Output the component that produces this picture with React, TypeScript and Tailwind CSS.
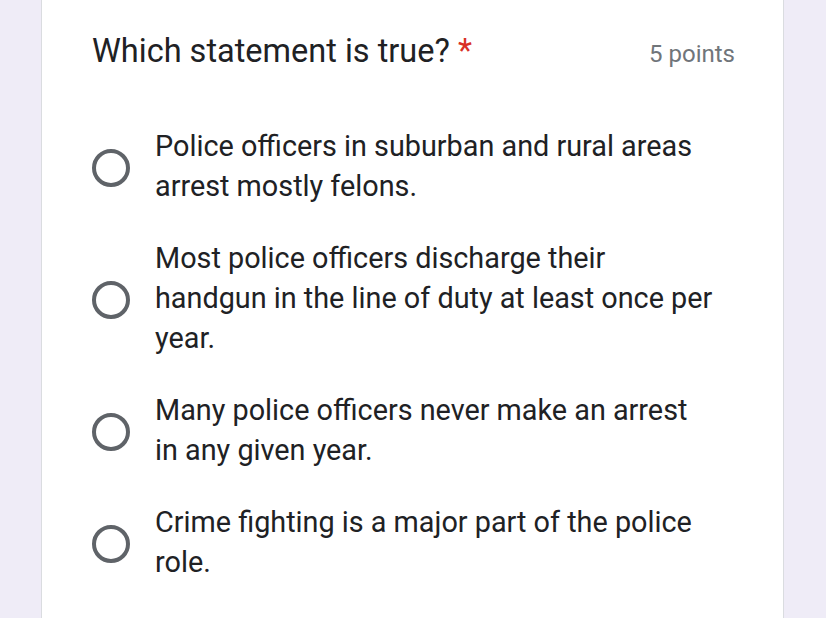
import React from 'react';

const options = [
  'Police officers in suburban and rural areas arrest mostly felons.',
  'Most police officers discharge their handgun in the line of duty at least once per year.',
  'Many police officers never make an arrest in any given year.',
  'Crime fighting is a major part of the police role.',
];

const App = () => {
  return (
    <div className="w-full h-[618px] overflow-hidden bg-[#efecf7] pl-[41px] font-['Roboto',sans-serif]">
      <div className="w-[743px] h-full bg-white border-x border-[#dadce0] pl-[50px] pr-[48px] pt-[31px]">
        {/* Question header */}
        <div className="flex items-baseline justify-between">
          <h2 className="text-[32.5px] leading-[40px] text-[#202124]">
            Which statement is true? <span className="text-[#d93025]">*</span>
          </h2>
          <span className="text-[24px] leading-[40px] text-[#70757a]">5 points</span>
        </div>

        {/* Options */}
        <div className="mt-[52px] flex flex-col gap-[32px]">
          {options.map((text) => (
            <label key={text} className="flex items-center gap-[25px] cursor-pointer">
              <span className="shrink-0 w-[38px] h-[38px] mt-[3px] rounded-full border-[4px] border-[#5f6368]" />
              <span className="w-[562px] text-[28.8px] leading-[40px] text-[#202124]">{text}</span>
            </label>
          ))}
        </div>
      </div>
    </div>
  );
};

export default App;
